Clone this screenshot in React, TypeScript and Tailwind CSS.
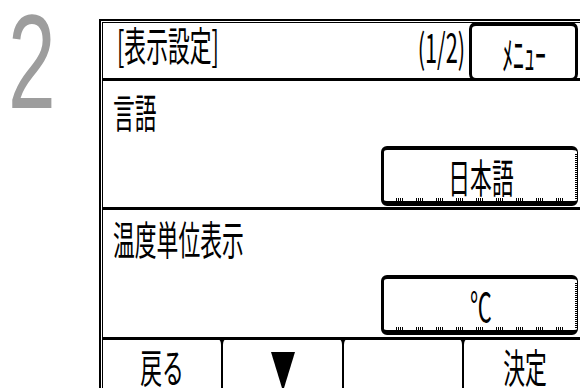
import React from "react";

const jp = "font-['Noto_Sans_CJK_JP',sans-serif]";

function Dots() {
  return (
    <>
      <div className="absolute left-[6px] right-[4px] bottom-0 h-[3px] bg-[repeating-linear-gradient(90deg,#fff_0_6px,#000_6px_7px,#fff_7px_8px,#000_8px_9px,#fff_9px_10px,#000_10px_11px,#fff_11px_12px,#000_12px_13px,#fff_13px_20px)]" />
      <div className="absolute right-0 top-[4px] bottom-[2px] w-[2px] bg-[repeating-linear-gradient(180deg,#000_0_1px,#fff_1px_2px)]" />
    </>
  );
}

function ValueButton({ children, mb }: { children: React.ReactNode; mb: string }) {
  return (
    <div
      className={`relative self-end mr-[12px] ${mb} w-[197px] h-[60px] rounded-[6px] border-[3px] border-t-[4px] border-r-[1px] border-b-[5px] border-black bg-white flex items-center justify-center`}
    >
      <Dots />
      <span className="inline-block scale-x-[0.545] text-[40px] leading-none text-black">{children}</span>
    </div>
  );
}

function Notch() {
  return (
    <svg className="absolute -right-[5px] -top-px" width="8" height="6" viewBox="0 0 8 6">
      <path d="M0 0 H8 Q5 1 5 6 H3 Q3 1 0 0 Z" fill="#000" />
    </svg>
  );
}

export default function App() {
  return (
    <div className={`w-[580px] h-[388px] overflow-hidden bg-white flex ${jp} text-black`}>
      <div className="w-[99px] shrink-0">
        <span className="inline-block mt-[7px] ml-[8px] origin-left scale-x-[0.64] text-[134px] leading-[110px] text-[#9d9d9d] font-['Liberation_Sans',sans-serif]">
          2
        </span>
      </div>
      <div className="mt-[19px] w-[495px] h-[400px] shrink-0 border-2 border-black p-px">
        <div className="border border-black h-full flex flex-col">
          {/* header */}
          <div className="flex h-[58px] shrink-0 border-b-[3px] border-black">
            <div className="pl-[14px] pt-px">
              <span className="inline-block origin-left scale-x-[0.545] text-[40px] leading-none">[表示設定]</span>
            </div>
            <div className="ml-auto mr-[4px] pt-[3px]">
              <span className="inline-block origin-right scale-x-[0.545] text-[40px] leading-none">(1/2)</span>
            </div>
            <div className="relative z-10 -mt-px -mb-[3px] mr-[12px] w-[109px] shrink-0 rounded-[7px] border-[3px] border-t-[4px] border-black bg-white flex items-center justify-center">
              <span className="inline-block scale-x-[0.545] text-[40px] leading-none pt-px">ﾒﾆｭｰ</span>
            </div>
          </div>
          {/* row 1 */}
          <div className="h-[129px] shrink-0 border-b-[3px] border-black flex flex-col pt-[10px]">
            <div className="pl-[10px]">
              <span className="inline-block origin-left scale-x-[0.545] text-[40px] leading-none">言語</span>
            </div>
            <div className="flex-1" />
            <ValueButton mb="mb-[1px]">日本語</ValueButton>
          </div>
          {/* row 2 */}
          <div className="h-[130px] shrink-0 border-b-[3px] border-black flex flex-col pt-[8px]">
            <div className="pl-[10px]">
              <span className="inline-block origin-left scale-x-[0.545] text-[40px] leading-none">温度単位表示</span>
            </div>
            <div className="flex-1" />
            <ValueButton mb="mb-[2px]">℃</ValueButton>
          </div>
          {/* tabs */}
          <div className="flex flex-1">
            <div className="relative w-[120px] shrink-0 border-r-2 border-black flex justify-center pt-[6px]">
              <span className="inline-block scale-x-[0.545] text-[40px] leading-none">戻る</span>
              <Notch />
            </div>
            <div className="relative w-[121px] shrink-0 border-r-2 border-black flex justify-center pt-[12px]">
              <svg width="24" height="36" viewBox="0 0 24 36">
                <polygon points="0,0 24,0 13,36 11,36" fill="#000" />
              </svg>
              <Notch />
            </div>
            <div className="relative w-[120px] shrink-0 border-r-2 border-black">
              <Notch />
            </div>
            <div className="w-[122px] shrink-0 flex justify-center pt-[6px]">
              <span className="inline-block scale-x-[0.545] text-[40px] leading-none">決定</span>
            </div>
          </div>
        </div>
      </div>
    </div>
  );
}
